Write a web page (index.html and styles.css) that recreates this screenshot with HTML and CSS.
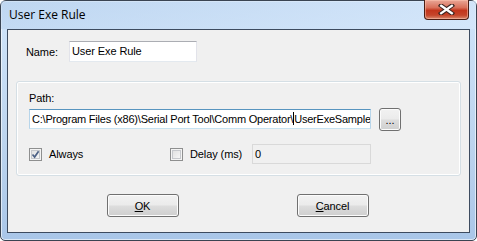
FILE: index.html
```html
<!DOCTYPE html>
<html lang="en">

<head>
    <meta charset="UTF-8">
    <title>User Exe Rule</title>
    <link rel="stylesheet" href="styles.css">
</head>

<body>
    <!-- Dialog window -->
    <div class="window">
        <div class="titlebar">
            <span class="title">User Exe Rule</span>
            <div class="close-btn">
                <svg width="17" height="11" viewBox="0 0 17 11">
                    <path d="M3 1.5 L14 9.5 M14 1.5 L3 9.5" stroke="#3b2420" stroke-width="4.4" stroke-linecap="square" />
                    <path d="M3.2 1.8 L13.8 9.2 M13.8 1.8 L3.2 9.2" stroke="#fff" stroke-width="2.4" stroke-linecap="square" />
                </svg>
            </div>
        </div>

        <div class="client">
            <!-- Name -->
            <div class="name-row">
                <label class="label">Name:</label>
                <div class="textbox name-box">User Exe Rule</div>
            </div>

            <!-- Group -->
            <div class="group">
                <label class="label">Path:</label>
                <div class="path-row">
                    <div class="textbox path-box">C:\Program Files (x86)\Serial Port Tool\Comm Operator\<span class="caret"></span>UserExeSample</div>
                    <div class="button browse-btn">...</div>
                </div>
                <div class="option-row">
                    <div class="check-item always">
                        <span class="checkbox checked">
                            <svg width="9" height="9" viewBox="0 0 9 9">
                                <path d="M1.5 4.5 L3.6 7 L7.6 1.2" fill="none" stroke="#4d6185" stroke-width="1.7" />
                            </svg>
                        </span>
                        <span>Always</span>
                    </div>
                    <div class="check-item delay">
                        <span class="checkbox"></span>
                        <span>Delay (ms)</span>
                    </div>
                    <div class="textbox delay-box">0</div>
                </div>
            </div>

            <!-- Buttons -->
            <div class="button-row">
                <div class="button"><u>O</u>K</div>
                <div class="button"><u>C</u>ancel</div>
            </div>
        </div>
    </div>
</body>

</html>
```

FILE: styles.css
```css
/* General Reset */
* {
    margin: 0;
    padding: 0;
    box-sizing: border-box;
}

body {
    width: 477px;
    height: 241px;
    font-family: 'Liberation Sans', Arial, sans-serif;
    font-size: 11px;
    letter-spacing: -0.1px;
    color: #000;
    background: #fff;
    overflow: hidden;
}

/* Window frame */
.window {
    width: 477px;
    height: 241px;
    border: 1px solid #3a4452;
    border-radius: 6px 6px 5px 5px;
    background: linear-gradient(180deg, #c4dbf4 0%, #cde2f8 12%, #bcd4ee 60%, #a9c6e8 100%);
    padding: 0 6px 7px 6px;
    display: flex;
    flex-direction: column;
    box-shadow: inset 0 0 0 1px rgba(255, 255, 255, 0.6);
}

.titlebar {
    height: 28px;
    display: flex;
    justify-content: space-between;
    align-items: flex-start;
    background: linear-gradient(90deg, rgba(185, 210, 238, 0.5), rgba(215, 232, 251, 0.7));
    margin: 0 -6px;
    padding: 0 7px 0 8px;
}

.title {
    font-family: 'Segoe UI', 'Open Sans', sans-serif;
    font-size: 12px;
    letter-spacing: 0;
    line-height: 14px;
    margin-top: 7px;
    color: #000;
}

.close-btn {
    width: 45px;
    height: 20px;
    margin-top: -1px;
    border: 1px solid #4a1d14;
    border-top: none;
    border-radius: 0 0 4px 4px;
    background: linear-gradient(180deg, #e9a797 0%, #d9705a 40%, #c2351c 55%, #c5452a 80%, #d88a70 100%);
    box-shadow: inset 0 0 0 1px rgba(255, 200, 180, 0.5);
    display: flex;
    justify-content: center;
    align-items: center;
}

/* Client area */
.client {
    flex: 1;
    border: 1px solid #3d4b5f;
    background: #f0f0f0;
    display: flex;
    flex-direction: column;
    padding: 0 8px;
}

.label {
    display: block;
}

.textbox {
    background: #fff;
    border: 1px solid #abadb3;
    border-color: #abadb3 #e2e3ea #e3e9ef #e2e3ea;
    height: 20px;
    line-height: 18px;
    padding-left: 2px;
    white-space: nowrap;
    overflow: hidden;
}

.name-row {
    display: flex;
    align-items: center;
    padding-left: 10px;
    margin-top: 11px;
}

.name-row .label {
    width: 43px;
}

.name-box {
    width: 128px;
    height: 21px;
    line-height: 19px;
}

/* Group box */
.group {
    margin-top: 19px;
    height: 95px;
    border: 1px solid #d5dfe5;
    border-radius: 3px;
    box-shadow: inset 0 0 0 1px #fff;
    padding: 10px 12px 0 12px;
}

.path-row {
    display: flex;
    align-items: center;
    gap: 8px;
    margin-top: 3px;
}

.path-box {
    width: 342px;
    letter-spacing: -0.22px;
    border-color: #5794bf #b7d5ea #c7e2f1 #b7d5ea;
}

.caret {
    display: inline-block;
    width: 1px;
    height: 13px;
    background: #000;
    vertical-align: -2px;
}

.option-row {
    display: flex;
    align-items: center;
    margin-top: 13px;
}

.check-item {
    display: flex;
    align-items: center;
    gap: 7px;
}

.always {
    width: 141px;
}

.delay {
    width: 82px;
}

.checkbox {
    width: 13px;
    height: 13px;
    border: 1px solid #8e8f8f;
    background: linear-gradient(135deg, #dcdcdc, #fbfbfb);
    box-shadow: inset 0 0 0 1px #f4f4f4, inset 0 0 0 2px #c6c8cc;
    display: flex;
    justify-content: center;
    align-items: center;
}

.delay-box {
    width: 119px;
    background: #f0f0f0;
    border-color: #d9d9d9;
}

/* Buttons */
.button {
    width: 72px;
    height: 23px;
    border: 1px solid #707070;
    border-radius: 3px;
    background: linear-gradient(180deg, #f2f2f2 0%, #ebebeb 48%, #dddddd 52%, #cfcfcf 100%);
    box-shadow: inset 0 0 0 1px #fcfcfc;
    display: flex;
    justify-content: center;
    align-items: center;
}

.browse-btn {
    width: 22px;
    margin-top: 1px;
}

.button-row {
    display: flex;
    justify-content: center;
    gap: 118px;
    margin-top: 18px;
    padding-right: 2px;
}

u {
    text-decoration: underline;
}
```
